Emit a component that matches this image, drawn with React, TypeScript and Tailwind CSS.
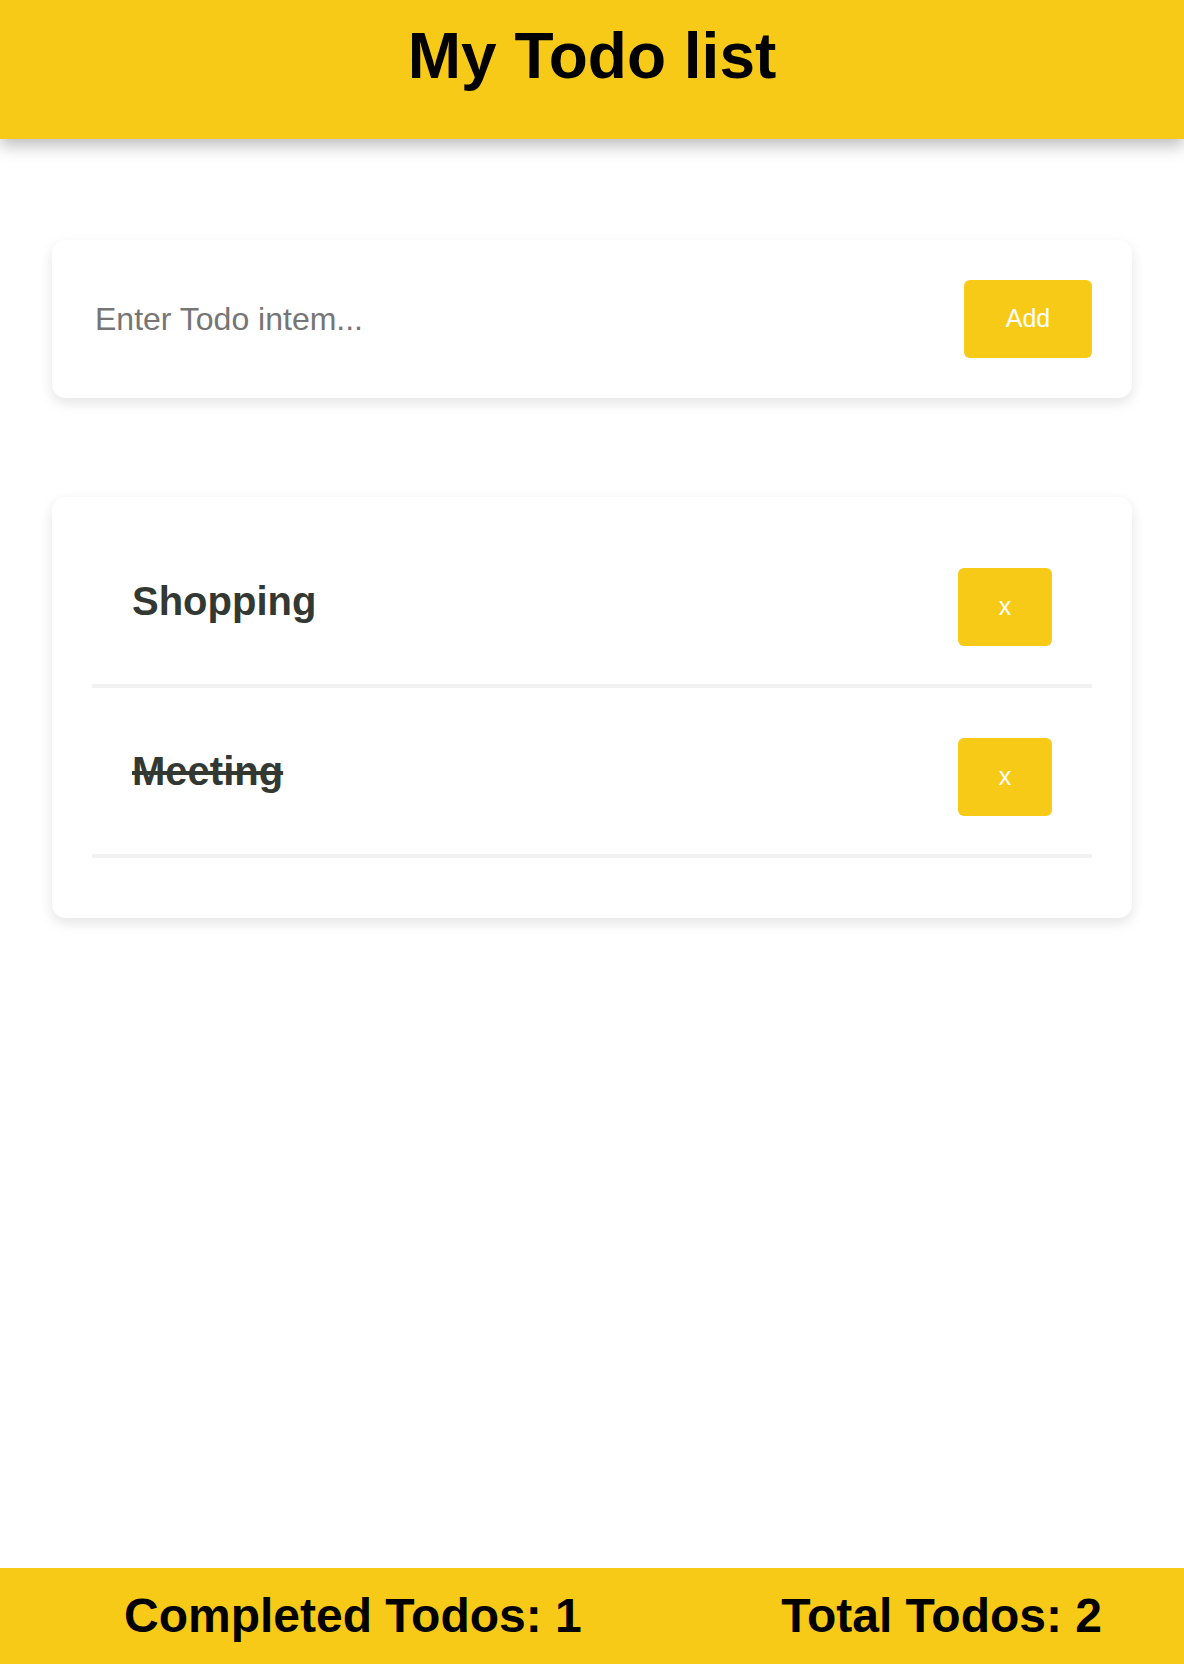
import { useState } from "react";

interface Todo {
  id: number;
  text: string;
  done: boolean;
}

const initialTodos: Todo[] = [
  { id: 1, text: "Shopping", done: false },
  { id: 2, text: "Meeting", done: true },
];

function TodoRow({ todo, onRemove }: { todo: Todo; onRemove: () => void }) {
  return (
    <li className="flex h-[170px] items-center justify-between border-b-4 border-[#f2f2f2] pl-[40px] pr-[40px]">
      <span
        className={`text-[40px] font-bold leading-[46px] text-[#333833] ${
          todo.done ? "line-through" : ""
        }`}
      >
        {todo.text}
      </span>
      <button
        onClick={onRemove}
        className="mt-[12px] h-[78px] w-[94px] rounded-md bg-[#f7ca18] text-[25px] text-white"
      >
        x
      </button>
    </li>
  );
}

export default function App() {
  const [todos, setTodos] = useState<Todo[]>(initialTodos);
  const [value, setValue] = useState("");

  const completed = todos.filter((t) => t.done).length;

  return (
    <div className="flex min-h-screen flex-col bg-white font-['Liberation_Sans',Arial,sans-serif]">
      <header className="relative z-10 h-[139px] bg-[#f7ca18] pt-[19px] text-center shadow-[0_6px_16px_rgba(0,0,0,0.28)]">
        <h1 className="text-[64px] font-bold leading-[74px] text-black">
          My Todo list
        </h1>
      </header>

      <main className="flex flex-col px-[52px]">
        <div className="mt-[101px] flex items-center justify-between rounded-[14px] bg-white p-[40px] shadow-[0_5px_14px_rgba(0,0,0,0.11)]">
          <input
            value={value}
            onChange={(e) => setValue(e.target.value)}
            placeholder="Enter Todo intem..."
            className="flex-1 bg-transparent pl-[3px] text-[32px] text-[#333] outline-none placeholder:text-[#757575]"
          />
          <button
            onClick={() => {
              if (!value.trim()) return;
              setTodos([...todos, { id: Date.now(), text: value, done: false }]);
              setValue("");
            }}
            className="h-[78px] w-[128px] rounded-md bg-[#f7ca18] text-[25px] text-white"
          >
            Add
          </button>
        </div>

        <ul className="mt-[99px] rounded-[14px] bg-white px-[40px] pb-[60px] pt-[21px] shadow-[0_5px_14px_rgba(0,0,0,0.11)]">
          {todos.map((todo) => (
            <TodoRow
              key={todo.id}
              todo={todo}
              onRemove={() => setTodos(todos.filter((t) => t.id !== todo.id))}
            />
          ))}
        </ul>
      </main>

      <footer className="mt-auto flex h-[96px] items-center justify-between bg-[#f7ca18] pl-[124px] pr-[82px] text-[48px] font-bold text-black">
        <span>Completed Todos: {completed}</span>
        <span>Total Todos: {todos.length}</span>
      </footer>
    </div>
  );
}
